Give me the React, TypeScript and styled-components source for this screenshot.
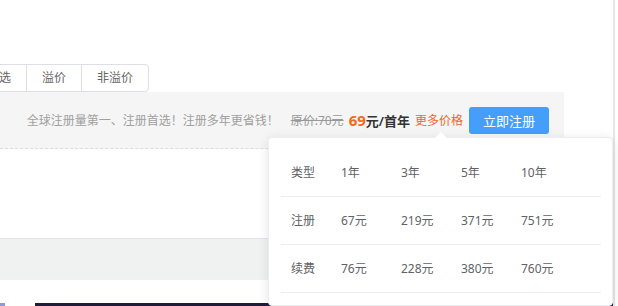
import React from "react";
import styled, { createGlobalStyle } from "styled-components";

const Global = createGlobalStyle`
  html, body { margin: 0; padding: 0; background: #fff; }
  body { font-family: "Noto Sans", "Noto Sans CJK SC", sans-serif; }
  * { box-sizing: border-box; }
`;

const Page = styled.div`
  display: flex;
  width: 618px;
  height: 306px;
  overflow: hidden;
  background: #fff;
`;

const Main = styled.div`
  position: relative;
  flex: 1;
  display: flex;
  flex-direction: column;
  padding-top: 64px;
  min-width: 0;
  & > * { flex-shrink: 0; }
`;

const ScrollTrack = styled.div`
  width: 5px;
  border-left: 2px solid #e6e6e6;
  background: #fff;
`;

const TabGroup = styled.div`
  display: flex;
  align-self: flex-start;
  margin-left: -29px;
  height: 28px;
  border: 1px solid #dcdfe6;
  border-radius: 0 4px 4px 0;
  background: #fff;
`;

const Tab = styled.div<{ $first?: boolean }>`
  padding: 0 15px;
  font-size: 12px;
  line-height: 26px;
  color: #666;
  white-space: nowrap;
  border-left: ${(p) => (p.$first ? "none" : "1px solid #dcdfe6")};
`;

const PromoBar = styled.div`
  display: flex;
  align-items: center;
  justify-content: flex-end;
  width: 564px;
  height: 57px;
  padding-right: 15px;
  background: #f5f5f5;
  border-bottom: 1px dashed #dcdcdc;
  white-space: nowrap;
`;

const Slogan = styled.span`
  font-size: 12px;
  color: #a0a0a0;
  margin-right: 12px;
`;

const OldPrice = styled.span`
  font-size: 12px;
  color: #999;
  text-decoration: line-through;
  margin-right: 5px;
`;

const Price = styled.span`
  font-size: 15px;
  font-weight: 700;
  color: #f26a1b;
`;

const Unit = styled.span`
  font-size: 13px;
  font-weight: 600;
  color: #333;
  margin-right: 5px;
`;

const MoreLink = styled.span`
  font-size: 12px;
  color: #f0652a;
  margin-right: 6px;
`;

const RegisterButton = styled.button`
  width: 80px;
  height: 27px;
  border: none;
  border-radius: 3px;
  background: #459ffa;
  color: #fff;
  font-family: inherit;
  font-size: 13px;
  padding: 0;
  cursor: pointer;
`;

const Blank = styled.div<{ $h: number }>`
  height: ${(p) => p.$h}px;
`;

const Band = styled.div`
  height: 42px;
  border-top: 1px solid #e3e6e6;
  background: #f0f2f2;
`;

const ImageRow = styled.div`
  display: flex;
  gap: 30px;
  height: 4px;
`;

const ImageThumb = styled.div<{ $w?: number; $c: string }>`
  ${(p) => (p.$w ? `width: ${p.$w}px;` : "flex: 1;")}
  background: ${(p) => p.$c};
`;

const Popover = styled.div`
  position: absolute;
  left: 268px;
  top: 137px;
  width: 345px;
  padding: 10px 12px 12px;
  background: #fff;
  border: 1px solid #ebeef5;
  border-radius: 4px;
  box-shadow: 0 2px 12px 0 rgba(0, 0, 0, 0.1);

  &::before {
    content: "";
    position: absolute;
    left: 166px;
    top: -6px;
    border-left: 6px solid transparent;
    border-right: 6px solid transparent;
    border-bottom: 6px solid #fff;
  }
`;

const PriceTable = styled.table`
  width: 320px;
  border-collapse: collapse;
  table-layout: fixed;
`;

const Row = styled.tr`
  height: 48px;
  border-bottom: 1px solid #ebeef5;
`;

const Cell = styled.td<{ $w?: number }>`
  ${(p) => (p.$w ? `width: ${p.$w}px;` : "")}
  padding: 0 0 0 10px;
  font-size: 12px;
  color: #606266;
  white-space: nowrap;
`;

const rows = [
  ["类型", "1年", "3年", "5年", "10年"],
  ["注册", "67元", "219元", "371元", "751元"],
  ["续费", "76元", "228元", "380元", "760元"],
];

const widths = [50, 60, 60, 60, undefined];

export default function App() {
  return (
    <Page>
      <Global />
      <Main>
        <TabGroup>
          <Tab $first>优选</Tab>
          <Tab>溢价</Tab>
          <Tab>非溢价</Tab>
        </TabGroup>
        <PromoBar>
          <Slogan>全球注册量第一、注册首选！注册多年更省钱！</Slogan>
          <OldPrice>原价:70元</OldPrice>
          <Price>69</Price>
          <Unit>元/首年</Unit>
          <MoreLink>更多价格</MoreLink>
          <RegisterButton>立即注册</RegisterButton>
        </PromoBar>
        <Blank $h={89} />
        <Band />
        <Blank $h={23} />
        <ImageRow>
          <ImageThumb $w={5} $c="#8f9ad8" />
          <ImageThumb $c="#1f1b3b" />
        </ImageRow>
        <Popover>
          <PriceTable>
            <tbody>
              {rows.map((r, i) => (
                <Row key={i}>
                  {r.map((c, j) => (
                    <Cell key={j} $w={widths[j]}>
                      {c}
                    </Cell>
                  ))}
                </Row>
              ))}
            </tbody>
          </PriceTable>
        </Popover>
      </Main>
      <ScrollTrack />
    </Page>
  );
}
